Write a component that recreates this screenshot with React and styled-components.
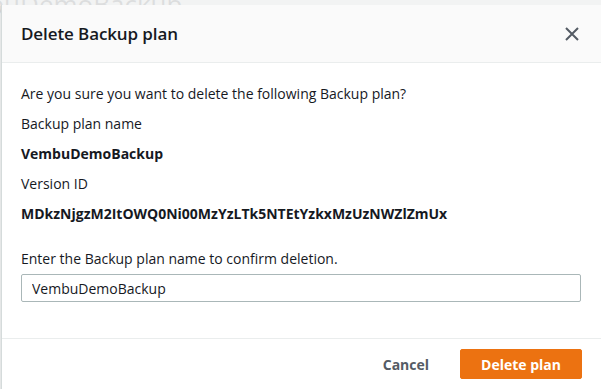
import styled, { createGlobalStyle } from "styled-components";

const Global = createGlobalStyle`
  html, body {
    margin: 0;
    padding: 0;
    background: #f2f3f3;
    overflow: hidden;
  }
  * { box-sizing: border-box; }
`;

const Page = styled.div`
  position: relative;
  width: 601px;
  height: 389px;
  overflow: hidden;
  font-family: "Open Sans", "Noto Sans", sans-serif;
`;

const PageTitle = styled.h1`
  margin: -14px 0 0 -66px;
  font-size: 26px;
  font-weight: 400;
  color: #16191f;
`;

const Overlay = styled.div`
  position: absolute;
  inset: 0;
  background: rgba(242, 243, 243, 0.9);
`;

const Modal = styled.div`
  position: absolute;
  top: 5px;
  left: 1px;
  width: 640px;
  background: #fff;
  border-left: 1px solid #d5dbdb;
  box-shadow: 0 1px 1px rgba(0, 28, 36, 0.3);
`;

const Header = styled.div`
  height: 58px;
  display: flex;
  align-items: center;
  justify-content: space-between;
  padding: 0 0 0 19px;
  width: 600px;
  background: #fafafa;
  border-bottom: 1px solid #eaeded;
`;

const Title = styled.h2`
  margin: 0;
  font-size: 17px;
  font-weight: 600;
  color: #16191f;
  letter-spacing: -0.1px;
`;

const Close = styled.button`
  border: 0;
  background: none;
  padding: 0;
  margin-right: 22px;
  display: flex;
  color: #545b64;
`;

const Body = styled.div`
  width: 600px;
  padding: 16px 19px 36px 19px;
  border-bottom: 1px solid #eaeded;
  color: #16191f;
  font-size: 14px;
`;

const Line = styled.p`
  margin: 0;
  line-height: 30px;
  font-weight: ${(p) => (p.$bold ? 700 : 400)};
`;

const Field = styled.div`
  margin-top: 19px;
  display: flex;
  flex-direction: column;
  gap: 4px;
`;

const Label = styled.label`
  line-height: 22px;
`;

const Input = styled.input`
  height: 28px;
  width: 560px;
  border: 1px solid #aab7b8;
  border-radius: 2px;
  padding: 0 10px;
  font: inherit;
  color: #16191f;
`;

const Footer = styled.div`
  width: 600px;
  height: 50px;
  display: flex;
  align-items: center;
  justify-content: flex-end;
  gap: 10px;
  padding-right: 20px;
`;

const Button = styled.button`
  height: 30px;
  padding: 0 20px;
  border-radius: 2px;
  font-family: inherit;
  font-size: 14px;
  font-weight: 700;
  border: 1px solid ${(p) => (p.$primary ? "#ec7211" : "transparent")};
  background: ${(p) => (p.$primary ? "#ec7211" : "transparent")};
  color: ${(p) => (p.$primary ? "#fff" : "#545b64")};
  min-width: ${(p) => (p.$primary ? "119px" : "auto")};
`;

export default function App() {
  return (
    <Page>
      <Global />
      <PageTitle>VembuDemoBackup</PageTitle>
      <Overlay />
      <Modal>
        <Header>
          <Title>Delete Backup plan</Title>
          <Close aria-label="Close">
            <svg width="16" height="16" viewBox="0 0 16 16">
              <path d="M2 2l12 12M14 2L2 14" stroke="currentColor" strokeWidth="2" fill="none" />
            </svg>
          </Close>
        </Header>
        <Body>
          <Line>Are you sure you want to delete the following Backup plan?</Line>
          <Line>Backup plan name</Line>
          <Line $bold>VembuDemoBackup</Line>
          <Line>Version ID</Line>
          <Line $bold>MDkzNjgzM2ItOWQ0Ni00MzYzLTk5NTEtYzkxMzUzNWZlZmUx</Line>
          <Field>
            <Label>Enter the Backup plan name to confirm deletion.</Label>
            <Input defaultValue="VembuDemoBackup" />
          </Field>
        </Body>
        <Footer>
          <Button>Cancel</Button>
          <Button $primary>Delete plan</Button>
        </Footer>
      </Modal>
    </Page>
  );
}
